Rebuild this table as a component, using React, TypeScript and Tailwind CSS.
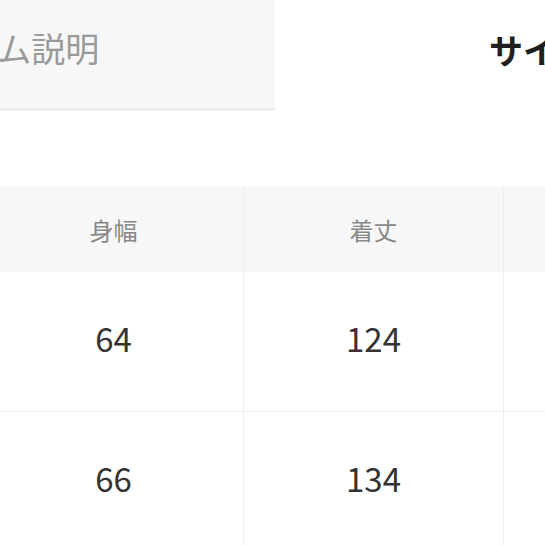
const rows = [
  { width: '64', length: '124' },
  { width: '66', length: '134' },
];

export default function App() {
  return (
    <div
      className="w-[545px] h-[545px] overflow-hidden bg-white"
      style={{ fontFamily: '"Noto Sans CJK JP", "Noto Sans", sans-serif' }}
    >
      {/* Tabs */}
      <div className="flex -ml-[277px] w-[1200px]">
        <div className="w-[552px] h-[111px] shrink-0 flex items-center justify-center bg-[#f7f7f7] border-b-[3px] border-[#ececec] pb-[12px]">
          <span className="text-[34px] text-[#9a9a9a] leading-none">アイテム説明</span>
        </div>
        <div className="w-[552px] h-[111px] shrink-0 flex items-center justify-start pl-[214px] pb-[12px]">
          <span className="text-[34px] font-bold text-[#1f1f1f] leading-none">サイズ</span>
        </div>
      </div>

      {/* Size table */}
      <div className="mt-[76px] -ml-[16px] w-[800px]">
        <div className="grid grid-cols-[260px_260px_260px] bg-[#f7f7f7] h-[85px]">
          {['身幅', '着丈', ''].map((label, i) => (
            <div
              key={i}
              className={`flex items-center justify-center text-[24px] text-[#888] ${i < 2 ? 'border-r border-[#ececec]' : ''}`}
            >
              {label}
            </div>
          ))}
        </div>
        {rows.map((row) => (
          <div key={row.width} className="grid grid-cols-[260px_260px_260px] h-[140px] border-b border-[#efefef]">
            <div className="flex items-center justify-center border-r border-[#efefef] text-[33px] text-[#333] pb-[6px]">
              {row.width}
            </div>
            <div className="flex items-center justify-center border-r border-[#efefef] text-[33px] text-[#333] pb-[6px]">
              {row.length}
            </div>
            <div />
          </div>
        ))}
      </div>
    </div>
  );
}
